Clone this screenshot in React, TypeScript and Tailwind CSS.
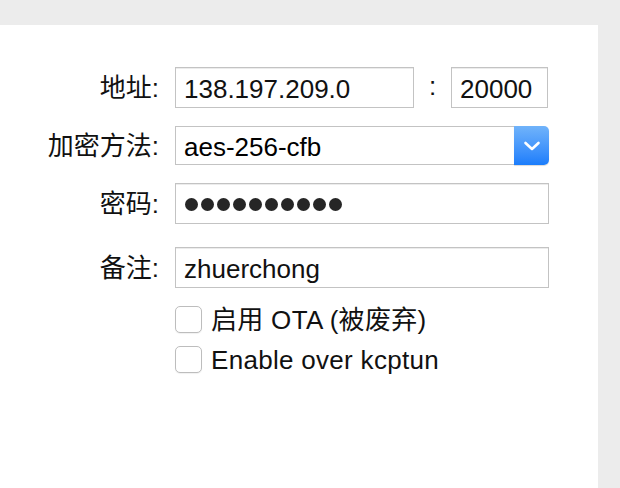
import React from "react";

const font = { fontFamily: '"Liberation Sans", "Noto Sans CJK SC", sans-serif' };

function Label({ text }: { text: string }) {
  return (
    <div className="w-[160px] shrink-0 text-right text-[26px] leading-none text-[#111] pr-[1px]">
      {text}
    </div>
  );
}

function TextBox({ value, className }: { value: string; className: string }) {
  return (
    <div
      className={`flex items-center border border-[#c3c3c3] bg-white pl-[8px] pt-[2px] text-[26px] leading-none text-[#111] shadow-[inset_0_1px_0_#ececec] ${className}`}
    >
      {value}
    </div>
  );
}

function Checkbox({ text }: { text: string }) {
  return (
    <div className="flex items-center">
      <div className="h-[27px] w-[27px] rounded-[5px] border border-[#bdbdbd] bg-white shadow-[0_1px_1px_rgba(0,0,0,0.06)]" />
      <span className="ml-[9px] text-[26px] leading-none tracking-[0.3px] text-[#111]">{text}</span>
    </div>
  );
}

export default function App() {
  return (
    <div className="h-[488px] w-[620px] bg-[#ececec] pt-[25px]" style={font}>
      <div className="h-[463px] w-[598px] bg-white pt-[42px]">
        {/* address + port */}
        <div className="flex items-center">
          <Label text="地址:" />
          <div className="ml-[15px] flex items-center">
            <TextBox value="138.197.209.0" className="h-[41px] w-[239px]" />
            <div className="flex w-[37px] justify-center pb-[4px] text-[26px] leading-none text-[#111]">
              :
            </div>
            <TextBox value="20000" className="h-[41px] w-[97px]" />
          </div>
        </div>

        {/* cipher */}
        <div className="mt-[18px] flex items-center">
          <Label text="加密方法:" />
          <div className="ml-[15px] flex h-[39px] w-[374px]">
            <div className="flex flex-1 items-center border border-r-0 border-[#c3c3c3] bg-white pl-[8px] pt-[2px] text-[26px] leading-none text-black">
              aes-256-cfb
            </div>
            <div className="flex w-[35px] items-center justify-center rounded-r-[5px] bg-gradient-to-b from-[#70b3fa] to-[#1a7dfb] shadow-[0_1px_1px_rgba(0,0,0,0.15)]">
              <svg width="18" height="12" viewBox="0 0 18 12">
                <path d="M2.5 3 L9 9 L15.5 3" fill="none" stroke="#fff" strokeWidth="2.6" strokeLinecap="round" strokeLinejoin="round" />
              </svg>
            </div>
          </div>
        </div>

        {/* password */}
        <div className="mt-[18px] flex items-center">
          <Label text="密码:" />
          <div className="ml-[15px] flex h-[41px] w-[374px] items-center gap-[3.5px] border border-[#c3c3c3] bg-white pl-[9px] pt-[2px] shadow-[inset_0_1px_0_#ececec]">
            {Array.from({ length: 10 }).map((_, i) => (
              <span key={i} className="h-[12.5px] w-[12.5px] rounded-full bg-[#262626]" />
            ))}
          </div>
        </div>

        {/* remark */}
        <div className="mt-[23px] flex items-center">
          <Label text="备注:" />
          <TextBox value="zhuerchong" className="ml-[15px] h-[41px] w-[374px]" />
        </div>

        <div className="ml-[175px] mt-[18px] flex flex-col gap-[13px]">
          <Checkbox text="启用 OTA (被废弃)" />
          <Checkbox text="Enable over kcptun" />
        </div>
      </div>
    </div>
  );
}
